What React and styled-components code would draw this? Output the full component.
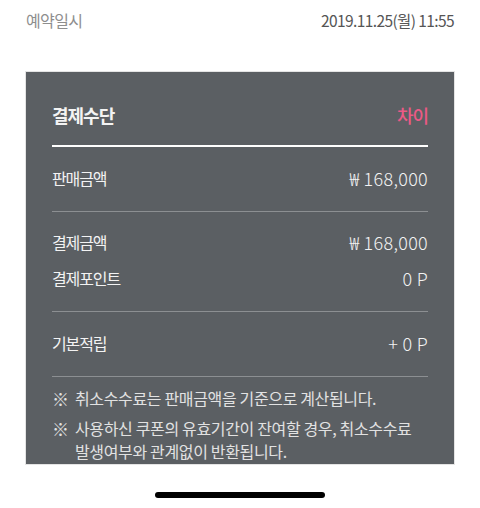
import React from "react";
import styled, { createGlobalStyle } from "styled-components";

const Global = createGlobalStyle`
  html, body { margin: 0; padding: 0; background: #ffffff; }
  body { font-family: "Noto Sans CJK KR", "Noto Sans", sans-serif; -webkit-font-smoothing: antialiased; }
`;

const Page = styled.div`
  width: 480px;
  height: 508px;
  display: flex;
  flex-direction: column;
  overflow: hidden;
`;

const TopRow = styled.div`
  display: flex;
  justify-content: space-between;
  align-items: center;
  height: 40px;
  padding: 0 26px;
  font-size: 16px;
  letter-spacing: -0.6px;
`;

const TopLabel = styled.span`
  color: #8e8e8e;
`;

const TopValue = styled.span`
  color: #555555;
  font-size: 15.5px;
  letter-spacing: -0.6px;
`;

const Panel = styled.div`
  margin: 32px 26px 0;
  background: #5b5f63;
  box-shadow: 0 0 0 1px #e4e4e4;
  padding: 0 26px;
  height: 392px;
  box-sizing: border-box;
  color: #f3f3f3;
`;

const Header = styled.div`
  display: flex;
  justify-content: space-between;
  align-items: center;
  padding: 30px 0 17px;
  line-height: 26px;
  font-size: 18px;
  font-weight: 700;
  letter-spacing: -1px;
  border-bottom: 2px solid #ffffff;
`;

const Accent = styled.span`
  color: #eb5a86;
  font-weight: 500;
`;

const Section = styled.div`
  display: flex;
  flex-direction: column;
  gap: 12px;
  padding: ${(p) => p.$top || 19}px 0 ${(p) => p.$bottom || 21}px;
  border-bottom: 1px solid #8c8f92;
`;

const Row = styled.div`
  display: flex;
  justify-content: space-between;
  align-items: center;
  line-height: 24px;
  font-size: 16px;
`;

const Label = styled.span`
  letter-spacing: -1.1px;
`;

const Value = styled.span`
  font-size: 18px;
  font-weight: 300;
  letter-spacing: 0.3px;
`;

const Notes = styled.div`
  display: flex;
  flex-direction: column;
  gap: 7px;
  padding-top: 10px;
  color: #e2e2e2;
  font-size: 16px;
  line-height: 23px;
  letter-spacing: -0.35px;
`;

const Note = styled.div`
  display: flex;
`;

const Mark = styled.span`
  flex: 0 0 23px;
  font-size: 17px;
`;

const NoteText = styled.span`
  display: flex;
  flex-direction: column;
`;

const HomeBar = styled.div`
  align-self: center;
  margin-top: 28px;
  width: 170px;
  height: 6px;
  border-radius: 3px;
  background: #000000;
`;

export default function App() {
  return (
    <Page>
      <Global />
      <TopRow>
        <TopLabel>예약일시</TopLabel>
        <TopValue>2019.11.25(월) 11:55</TopValue>
      </TopRow>
      <Panel>
        <Header>
          <span>결제수단</span>
          <Accent>차이</Accent>
        </Header>
        <Section $top={19} $bottom={21}>
          <Row>
            <Label>판매금액</Label>
            <Value>₩ 168,000</Value>
          </Row>
        </Section>
        <Section $top={18} $bottom={21}>
          <Row>
            <Label>결제금액</Label>
            <Value>₩ 168,000</Value>
          </Row>
          <Row>
            <Label>결제포인트</Label>
            <Value>0 P</Value>
          </Row>
        </Section>
        <Section $top={19} $bottom={21}>
          <Row>
            <Label>기본적립</Label>
            <Value>+ 0 P</Value>
          </Row>
        </Section>
        <Notes>
          <Note>
            <Mark>※</Mark>
            <NoteText>
              <span>취소수수료는 판매금액을 기준으로 계산됩니다.</span>
            </NoteText>
          </Note>
          <Note>
            <Mark>※</Mark>
            <NoteText>
              <span>사용하신 쿠폰의 유효기간이 잔여할 경우, 취소수수료</span>
              <span>발생여부와 관계없이 반환됩니다.</span>
            </NoteText>
          </Note>
        </Notes>
      </Panel>
      <HomeBar />
    </Page>
  );
}
